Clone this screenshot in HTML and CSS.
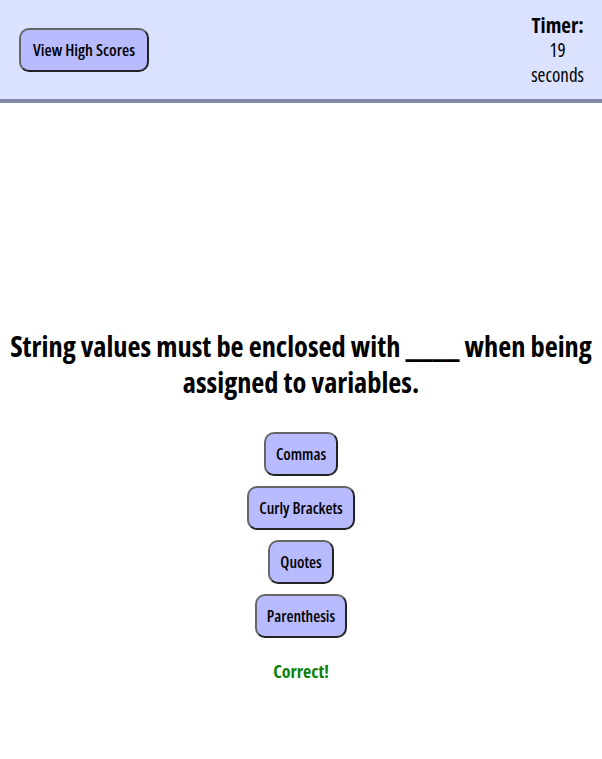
FILE: index.html
```html
<!DOCTYPE html>
<html>
<head>
<meta charset="utf-8">
<link rel="stylesheet" href="styles.css">
</head>
<body>
<header class="top">
  <button class="btn scores">View High Scores</button>
  <div class="timer">
    <div class="timer-label">Timer:</div>
    <div class="timer-val">19</div>
    <div class="timer-val">seconds</div>
  </div>
</header>
<main class="quiz">
  <h1 class="question">String values must be enclosed with ____ when being assigned to variables.</h1>
  <div class="answers">
    <button class="btn">Commas</button>
    <button class="btn">Curly Brackets</button>
    <button class="btn">Quotes</button>
    <button class="btn">Parenthesis</button>
  </div>
  <p class="result">Correct!</p>
</main>
</body>
</html>
```
FILE: styles.css
```css
* { box-sizing: border-box; }
body {
  margin: 0;
  font-family: "Open Sans", sans-serif;
  font-stretch: 75%;
  color: #000;
  background: #fff;
}
.top {
  height: 103px;
  background: #dbe2ff;
  border-bottom: 4px solid #7f88aa;
  display: flex;
  justify-content: space-between;
  align-items: center;
  padding: 0 18px 0 19px;
}
.btn {
  font-family: inherit;
  font-stretch: 75%;
  font-size: 16px;
  font-weight: 600;
  white-space: nowrap;
  background: #b8bbff;
  color: #000;
  border: 2px solid;
  border-color: #666 #222 #222 #666;
  border-radius: 10px;
  height: 44px;
  padding: 0 10px;
}
.scores {
  width: 130px;
  font-size: 16.5px;
}
.timer {
  text-align: center;
  line-height: 25px;
  padding-top: 1px;
}
.timer-label { font-size: 21px; font-weight: bold; }
.timer-val { font-size: 19px; font-weight: 500; }
.quiz {
  padding-top: 225px;
  text-align: center;
}
.question {
  margin: 0;
  font-size: 28.4px;
  line-height: 36px;
}
.answers {
  margin-top: 32px;
  display: flex;
  flex-direction: column;
  align-items: center;
  gap: 10px;
}
.result {
  margin: 21px 0 0;
  color: #0a7f0a;
  font-weight: bold;
  font-size: 18px;
}
```
